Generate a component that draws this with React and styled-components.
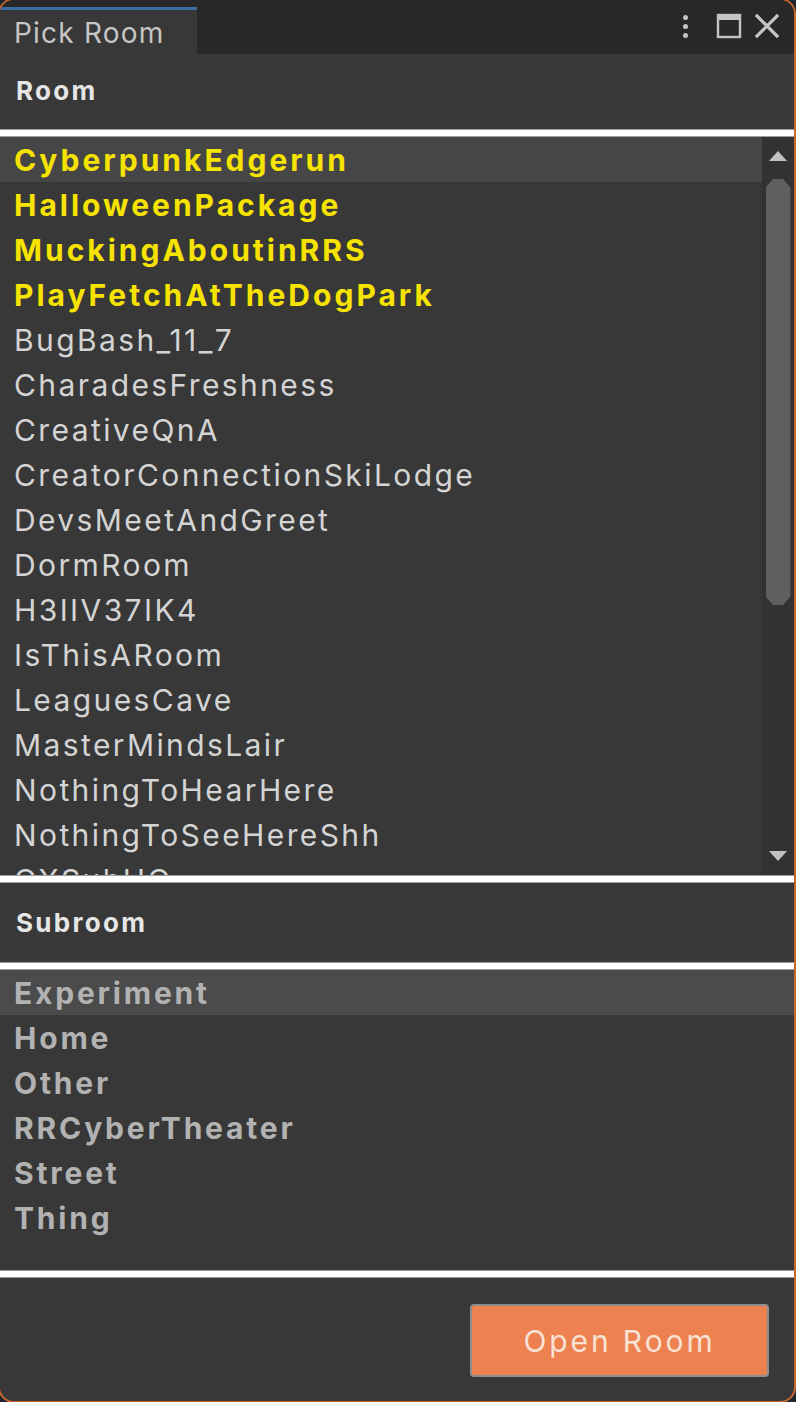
import React from 'react'
import styled, { createGlobalStyle } from 'styled-components'

const rooms = [
  { name: 'CyberpunkEdgerun', owned: true },
  { name: 'HalloweenPackage', owned: true },
  { name: 'MuckingAboutinRRS', owned: true },
  { name: 'PlayFetchAtTheDogPark', owned: true },
  { name: 'BugBash_11_7' },
  { name: 'CharadesFreshness' },
  { name: 'CreativeQnA' },
  { name: 'CreatorConnectionSkiLodge' },
  { name: 'DevsMeetAndGreet' },
  { name: 'DormRoom' },
  { name: 'H3IIV37IK4' },
  { name: 'IsThisARoom' },
  { name: 'LeaguesCave' },
  { name: 'MasterMindsLair' },
  { name: 'NothingToHearHere' },
  { name: 'NothingToSeeHereShh' },
  { name: 'QXSuhHQ' },
]

const subrooms = ['Experiment', 'Home', 'Other', 'RRCyberTheater', 'Street', 'Thing']

const GlobalStyle = createGlobalStyle`
  html, body {
    margin: 0;
    padding: 0;
    background: #1d2733;
    overflow: hidden;
  }
  * { box-sizing: border-box; }
`

export default function App() {
  return (
    <>
      <GlobalStyle />
      <Window>
        <TabBar>
          <Tab>Pick Room</Tab>
          <TabTools>
            <Kebab>
              <span /><span /><span />
            </Kebab>
            <svg width="26" height="26" viewBox="0 0 26 26">
              <rect x="2" y="2" width="22" height="22" fill="none" stroke="#c4c4c4" strokeWidth="2.4" />
              <rect x="2" y="2" width="22" height="5" fill="#c4c4c4" />
            </svg>
            <svg width="26" height="26" viewBox="0 0 26 26">
              <path d="M3 3 L23 23 M23 3 L3 23" stroke="#c4c4c4" strokeWidth="3.2" strokeLinecap="square" />
            </svg>
          </TabTools>
        </TabBar>

        <Body>
          <Header>Room</Header>
          <Separator />
          <ListArea $height={738}>
            <List>
              {rooms.map((r, i) => (
                <Row key={r.name} $selected={i === 0} $tone="#464646">
                  <RoomName $owned={r.owned}>{r.name}</RoomName>
                </Row>
              ))}
            </List>
            <ScrollBar>
              <Arrow $dir="up" />
              <Track>
                <Thumb />
              </Track>
              <Arrow $dir="down" />
            </ScrollBar>
          </ListArea>
          <Separator />
          <Header $tall>Subroom</Header>
          <Separator />
          <ListArea $height={300}>
            <List>
              {subrooms.map((s, i) => (
                <Row key={s} $selected={i === 0} $tone="#4b4b4b">
                  <SubName>{s}</SubName>
                </Row>
              ))}
            </List>
          </ListArea>
          <Separator />
          <Footer>
            <OpenButton type="button">Open Room</OpenButton>
          </Footer>
        </Body>
      </Window>
    </>
  )
}

const Window = styled.div`
  width: 798px;
  height: 1405px;
  margin: -2px 0 0 -2px;
  border: 2px solid #c8652c;
  border-radius: 16px;
  overflow: hidden;
  background: #383838;
  display: flex;
  flex-direction: column;
  font-family: Inter, "Noto Sans", sans-serif;
`

const TabBar = styled.div`
  height: 54px;
  flex: none;
  background: #282828;
  display: flex;
  align-items: flex-end;
  justify-content: space-between;
`

const Tab = styled.div`
  width: 197px;
  height: 47px;
  background: #383838;
  border-top: 3px solid #3d6fa6;
  color: #c6c6c6;
  font-size: 28px;
  letter-spacing: 1.2px;
  padding-left: 14px;
  line-height: 46px;
`

const TabTools = styled.div`
  align-self: center;
  display: flex;
  align-items: center;
  gap: 12px;
  padding-right: 14px;
  margin-top: -2px;
`

const Kebab = styled.div`
  display: flex;
  flex-direction: column;
  gap: 4px;
  margin-right: 16px;
  span {
    width: 5px;
    height: 5px;
    border-radius: 50%;
    background: #c4c4c4;
  }
`

const Body = styled.div`
  flex: 1;
  display: flex;
  flex-direction: column;
`

const Header = styled.div`
  height: ${p => (p.$tall ? 79 : 75)}px;
  flex: none;
  display: flex;
  align-items: center;
  padding-left: 16px;
  padding-bottom: ${p => (p.$tall ? 0 : 2)}px;
  color: #e6e6e6;
  font-weight: 700;
  font-size: 26px;
  letter-spacing: 2.3px;
`

const Separator = styled.div`
  height: 8px;
  flex: none;
  background: #ffffff;
  border-top: 1.5px solid #9c9c9c;
  border-bottom: 1.5px solid #9c9c9c;
`

const ListArea = styled.div`
  height: ${p => p.$height}px;
  flex: none;
  display: flex;
  overflow: hidden;
`

const List = styled.div`
  flex: 1;
  display: flex;
  flex-direction: column;
  overflow: hidden;
`

const Row = styled.div`
  height: 45px;
  flex: none;
  display: flex;
  align-items: center;
  padding-left: 14px;
  background: ${p => (p.$selected ? p.$tone : 'transparent')};
`

const RoomName = styled.span`
  font-size: 30px;
  font-weight: ${p => (p.$owned ? 700 : 400)};
  color: ${p => (p.$owned ? '#f7e300' : '#d4d4d4')};
  letter-spacing: ${p => (p.$owned ? 3 : 2.4)}px;
  white-space: nowrap;
`

const SubName = styled.span`
  font-size: 30px;
  font-weight: 700;
  color: #b2b2b2;
  letter-spacing: 2.8px;
`

const ScrollBar = styled.div`
  width: 32px;
  flex: none;
  background: #323232;
  display: flex;
  flex-direction: column;
  align-items: center;
  padding: 14px 0 14px;
`

const Arrow = styled.div`
  width: 0;
  height: 0;
  border-left: 9px solid transparent;
  border-right: 9px solid transparent;
  ${p =>
    p.$dir === 'up'
      ? 'border-bottom: 10px solid #c2c2c2;'
      : 'border-top: 10px solid #c2c2c2;'}
`

const Track = styled.div`
  flex: 1;
  width: 100%;
  display: flex;
  justify-content: center;
  padding-top: 18px;
`

const Thumb = styled.div`
  width: 25px;
  height: 426px;
  background: #5f5f5f;
  clip-path: polygon(30% 0, 70% 0, 100% 2%, 100% 98%, 70% 100%, 30% 100%, 0 98%, 0 2%);
`

const Footer = styled.div`
  flex: 1;
  display: flex;
  justify-content: flex-end;
  align-items: flex-start;
  padding: 26px 25px 0 0;
`

const OpenButton = styled.button`
  width: 299px;
  height: 73px;
  background: #ee8150;
  border: 2px solid #8e8e8e;
  border-radius: 4px;
  color: #f8e2d4;
  font-family: Inter, "Noto Sans", sans-serif;
  font-size: 30px;
  letter-spacing: 2.9px;
  padding: 0;
`
